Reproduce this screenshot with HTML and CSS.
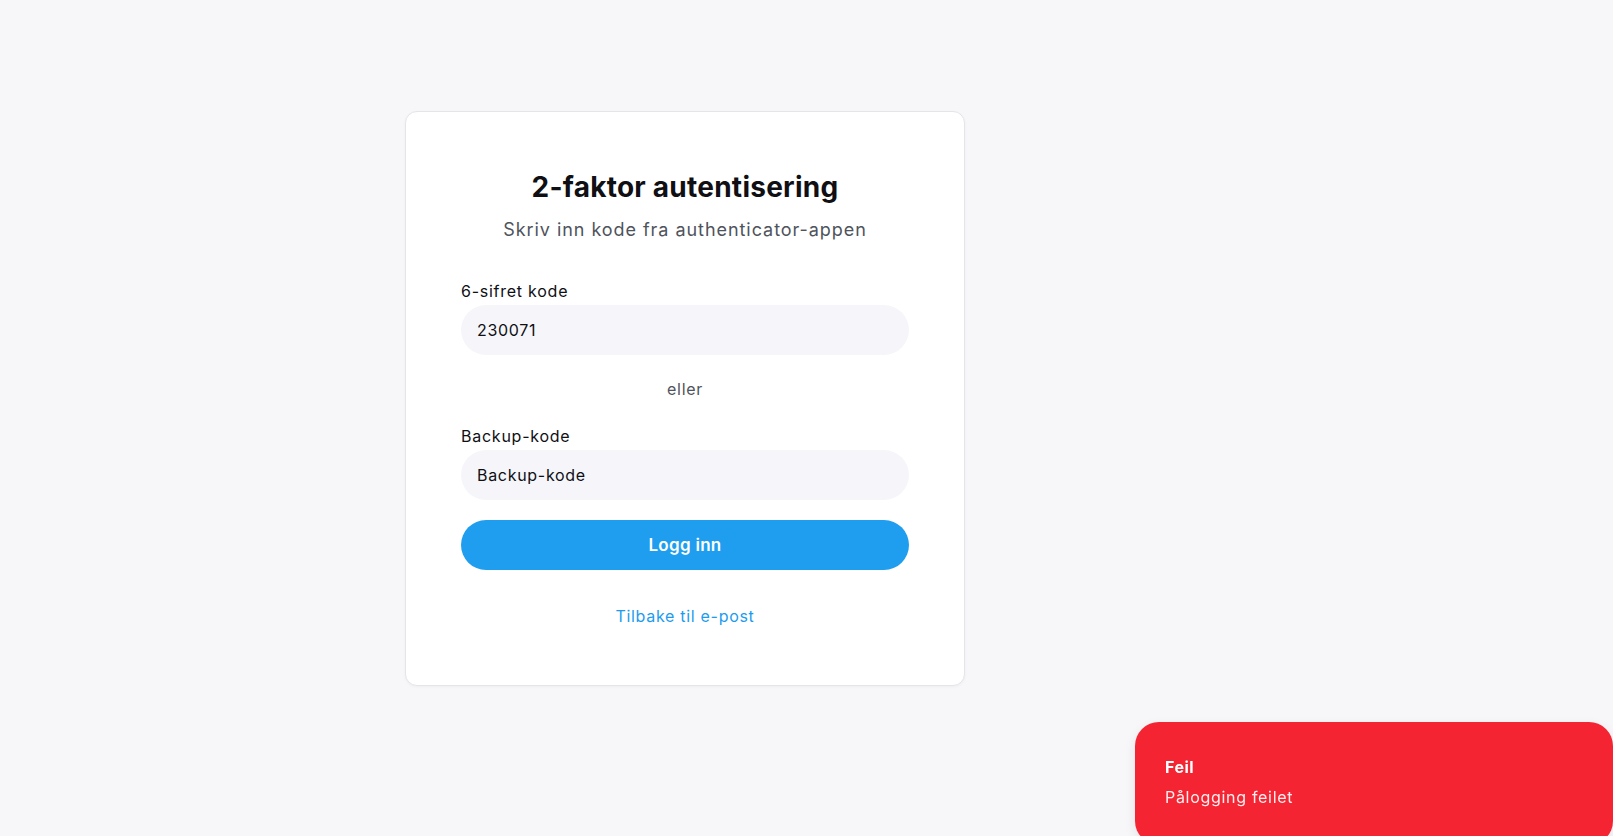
FILE: index.html
```html
<!DOCTYPE html>
<html lang="no">
<head>
<meta charset="utf-8">
<title>2-faktor autentisering</title>
<link rel="stylesheet" href="styles.css">
</head>
<body>
<main class="page">
  <section class="card">
    <h1 class="title">2-faktor autentisering</h1>
    <p class="subtitle">Skriv inn kode fra authenticator-appen</p>
    <form class="form">
      <label class="label" for="code">6-sifret kode</label>
      <input class="input" id="code" type="text" value="230071">
      <div class="divider">eller</div>
      <label class="label" for="backup">Backup-kode</label>
      <input class="input" id="backup" type="text" placeholder="Backup-kode">
      <button class="button" type="button">Logg inn</button>
    </form>
    <a class="link" href="#">Tilbake til e-post</a>
  </section>
</main>
<div class="toast">
  <div class="toast-title">Feil</div>
  <div class="toast-text">Pålogging feilet</div>
</div>
</body>
</html>
```

FILE: styles.css
```css
* { box-sizing: border-box; }
html, body {
  margin: 0;
  padding: 0;
  height: 100%;
}
body {
  background: #f7f7fa;
  font-family: Inter, "Noto Sans", sans-serif;
  color: #0f0f14;
  overflow: hidden;
}
.page {
  display: flex;
  justify-content: center;
  padding: 111px 243px 0 0;
}
.card {
  width: 560px;
  background: #ffffff;
  border: 1px solid #e4e4ea;
  border-radius: 12px;
  box-shadow: 0 1px 3px rgba(0, 0, 0, 0.04);
  padding: 58px 55px 57px;
  display: flex;
  flex-direction: column;
  align-items: center;
}
.title {
  margin: 0;
  font-size: 28px;
  line-height: 34px;
  font-weight: 700;
  letter-spacing: 0.25px;
  color: #0f0f14;
  text-align: center;
}
.subtitle {
  margin: 12px 0 0;
  font-size: 18px;
  line-height: 28px;
  letter-spacing: 0.95px;
  color: #4f535c;
  text-align: center;
}
.form {
  width: 100%;
  margin-top: 37px;
  display: flex;
  flex-direction: column;
}
.label {
  font-size: 16px;
  line-height: 20px;
  font-weight: 400;
  letter-spacing: 0.75px;
  color: #0f0f14;
  margin-bottom: 4px;
}
.input {
  width: 100%;
  height: 50px;
  border: none;
  outline: none;
  border-radius: 25px;
  background: #f6f6fa;
  padding: 0 16px;
  font-family: inherit;
  font-size: 16px;
  letter-spacing: 0.7px;
  color: #0f0f14;
}
.input::placeholder {
  color: #0f0f14;
  opacity: 1;
}
.divider {
  margin: 22px 0 25px;
  text-align: center;
  font-size: 16px;
  line-height: 24px;
  letter-spacing: 0.7px;
  color: #4f535c;
}
.button {
  margin-top: 20px;
  height: 50px;
  width: 100%;
  border: none;
  border-radius: 25px;
  background: #1f9eef;
  color: #ffffff;
  font-family: inherit;
  font-size: 17px;
  font-weight: 600;
  letter-spacing: 0.3px;
  cursor: pointer;
}
.link {
  margin-top: 34px;
  font-size: 16px;
  line-height: 24px;
  letter-spacing: 0.7px;
  color: #1d9bf0;
  text-decoration: none;
}
.toast {
  position: fixed;
  left: 1135px;
  top: 722px;
  width: 478px;
  background: #f42432;
  border-radius: 24px;
  padding: 33px 30px 36px;
  color: #ffffff;
  box-shadow: 0 4px 12px rgba(0, 0, 0, 0.08);
}
.toast-title {
  font-size: 16px;
  line-height: 24px;
  font-weight: 700;
  letter-spacing: 0.5px;
}
.toast-text {
  margin-top: 6px;
  font-size: 16px;
  line-height: 24px;
  letter-spacing: 0.7px;
  color: rgba(255, 255, 255, 0.92);
}
```
